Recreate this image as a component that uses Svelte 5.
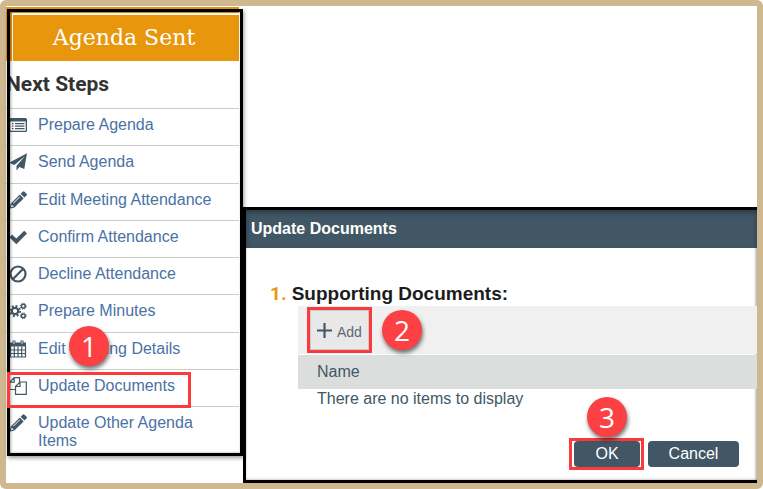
<script lang="ts">
  type Step = { icon: string; label: string; badge?: string; marked?: boolean };

  const steps: Step[] = [
    { icon: 'list', label: 'Prepare Agenda' },
    { icon: 'plane', label: 'Send Agenda' },
    { icon: 'pencil', label: 'Edit Meeting Attendance' },
    { icon: 'check', label: 'Confirm Attendance' },
    { icon: 'ban', label: 'Decline Attendance' },
    { icon: 'cogs', label: 'Prepare Minutes' },
    { icon: 'calendar', label: 'Edit Meeting Details', badge: '1' },
    { icon: 'files', label: 'Update Documents', marked: true },
    { icon: 'pencil', label: 'Update Other Agenda Items' }
  ];
</script>

{#snippet glyph(name: string)}
  <svg class="icon" viewBox="0 0 18 18" aria-hidden="true">
    {#if name === 'list'}
      <path fill-rule="evenodd" d="M1.5 2h15A1.5 1.5 0 0 1 18 3.500v11a1.500 1.500 0 0 1-1.500 1.500h-15A1.500 1.500 0 0 1 0 14.500v-11A1.500 1.500 0 0 1 1.500 2zM1.300 5.500v8.700q0 .5.5.5h14.400q.5 0 .5-.5V5.500z" />
      <path d="M3 7h1.500v1.300H3zM3 9.500h1.500v1.300H3zM3 12h1.500v1.300H3zM6 7h9.500v1.300H6zM6 9.500h9.500v1.300H6zM6 12h9.500v1.300H6z" />
    {:else if name === 'plane'}
      <path d="M18 .3 15.300 16l-5-2.100L7.500 17.500V13L15.700 3.200 5.400 11.900 0 9.700z" />
    {:else if name === 'pencil'}
      <path fill-rule="evenodd" d="M11.600 2.800 13.700.7q.9-.9 1.800 0l2 2q.9.9 0 1.800l-2.100 2.100zM10.800 3.600l3.800 3.800-9.200 9.200L.4 17.800l1.200-5zM2.600 13.500l-.7 2.800 2.800-.7zM10.500 5.500 4 12l.5.5L11 6z" />
    {:else if name === 'check'}
      <path d="M15.200 2.700 18 5.500 7.300 16.200.3 9.200l2.800-2.800 4.200 4.200z" />
    {:else if name === 'ban'}
      <circle cx="9" cy="9" r="7.500" class="line thick" />
      <path d="M3.800 14.200 14.200 3.800" class="line thick" />
    {:else if name === 'cogs'}
      <circle cx="6" cy="9" r="3.200" class="line thick" />
      <circle cx="6" cy="9" r="5" class="line teeth" />
      <circle cx="14.300" cy="4.200" r="1.900" class="line" />
      <circle cx="14.300" cy="4.200" r="2.900" class="line small-teeth" />
      <circle cx="14.300" cy="13.800" r="1.900" class="line" />
      <circle cx="14.300" cy="13.800" r="2.900" class="line small-teeth" />
    {:else if name === 'calendar'}
      <path d="M1 2.500h16v4H1z" />
      <path d="M3.500.5h3V5h-3zM11.500.5h3V5h-3z" />
      <path d="M1.500 6v11h15V6M5.300 6.500V17M9 6.500V17M12.700 6.500V17M1.500 10h15M1.500 13.500h15" class="line thin" />
      <path d="M5 1v3M13 1v3" class="slot" />
    {:else if name === 'files'}
      <path d="M6.500 12.500H.7V5.200L5.200.700h5.300v4M5.200.700v4.500H.7M6.500 9.500 11 5h6.300v12.300H6.500zM11 5v4.500H6.500" class="line thin" />
    {/if}
  </svg>
{/snippet}

<main class="frame">
  <aside class="sidebar">
    <div class="banner">
      <h1>Agenda Sent</h1>
    </div>
    <h2>Next Steps</h2>
    <ul class="steps">
      {#each steps as step}
        <li class:marked={step.marked}>
          <a href="#{step.icon}">
            {@render glyph(step.icon)}
            <span>{step.label}</span>
          </a>
          {#if step.badge}
            <b class="badge on-step">{step.badge}</b>
          {/if}
        </li>
      {/each}
    </ul>
  </aside>

  <section class="dialog" role="dialog" aria-labelledby="dialog-title">
    <header id="dialog-title">Update Documents</header>
    <div class="body">
      <h3><span class="num">1.</span> Supporting Documents:</h3>
      <div class="toolbar">
        <div class="callout">
          <button class="add" type="button">
            <svg viewBox="0 0 14 14" aria-hidden="true">
              <path d="M7 0v14M0 7h14" />
            </svg>
            Add
          </button>
        </div>
        <b class="badge">2</b>
      </div>
      <table>
        <thead>
          <tr><th scope="col">Name</th></tr>
        </thead>
        <tbody>
          <tr><td>There are no items to display</td></tr>
        </tbody>
      </table>
    </div>
    <footer>
      <div class="callout">
        <button class="action ok" type="button">OK</button>
        <b class="badge on-ok">3</b>
      </div>
      <button class="action cancel" type="button">Cancel</button>
    </footer>
  </section>
</main>

<style>
  :global(body) {
    background: #fff;
  }
  .frame {
    --tan: #cfb88f;
    --slate: #415766;
    --red: #fc3a3c;
    box-sizing: border-box;
    min-height: 100vh;
    display: grid;
    grid-template-columns: 237px 1fr;
    background: #fff;
    border: 6px solid var(--tan);
    border-radius: 6px;
    font-family: 'Liberation Sans', Arial, sans-serif;
    font-size: 16px;
    line-height: 18px;
    color: var(--slate);
  }
  h1,
  h2,
  h3 {
    margin: 0;
  }

  /* sidebar */
  .sidebar {
    position: relative;
    align-self: start;
    box-sizing: border-box;
    min-height: 450px;
    display: flex;
    flex-direction: column;
    padding: 1px 4px 4px 0;
  }
  /* the heavy outline lies over the edges of the list */
  .sidebar::after {
    content: '';
    position: absolute;
    inset: 3px 0 0 1px;
    border: 3px solid #000;
    box-shadow: 1px 2px 4px rgba(0, 0, 0, 0.4), inset 1px 0 3px rgba(0, 0, 0, 0.35);
    pointer-events: none;
  }
  .banner {
    background: #e8960c;
    padding: 6px 0 0 6px;
  }
  h1 {
    border-top: 2px solid #fff;
    border-left: 1px solid #fff;
    padding: 10px 4px 10px 0;
    font-family: 'Roboto Slab', 'DejaVu Serif', serif;
    font-size: 22px;
    font-weight: 400;
    line-height: 26px;
    text-align: center;
    color: #fff;
  }
  h2 {
    padding: 10px 0 11px;
    font-family: 'Roboto Slab', 'Roboto', sans-serif;
    font-size: 21px;
    font-weight: 700;
    line-height: 26px;
    color: #333;
  }
  .steps {
    flex: 1;
    display: flex;
    flex-direction: column;
    list-style: none;
    margin: 0;
    padding: 0;
  }
  .steps li {
    position: relative;
    flex: 1 0 auto;
    border-top: 1px solid #ccc;
    padding: 7px 0 10px;
  }
  .steps li:last-child {
    flex-grow: 0;
    padding-bottom: 2px;
  }
  .steps a {
    display: flex;
    gap: 11px;
    padding: 0 24px 0 3px;
    color: #4a72a4;
    text-decoration: none;
  }
  .marked::after {
    content: '';
    position: absolute;
    inset: 2px 48px -2px 1px;
    border: 3px solid var(--red);
    z-index: 1;
  }
  .icon {
    flex: none;
    width: 18px;
    height: 18px;
    fill: var(--slate);
  }
  .line {
    fill: none;
    stroke: var(--slate);
    stroke-width: 1.5;
  }
  .thick {
    stroke-width: 2.2;
  }
  .thin {
    stroke-width: 1.2;
  }
  .teeth {
    stroke-width: 2;
    stroke-dasharray: 1.96 1.96;
  }
  .small-teeth {
    stroke-width: 1;
    stroke-dasharray: 1.14 1.14;
  }
  .slot {
    stroke: #fff;
    stroke-width: 0.8;
  }

  /* numbered callouts */
  .badge {
    display: block;
    width: 40px;
    height: 40px;
    border-radius: 50%;
    background: #fc4043;
    box-shadow: 1px 3px 4px rgba(0, 0, 0, 0.55);
    font-family: 'Open Sans', sans-serif;
    font-size: 28px;
    font-weight: 400;
    line-height: 40px;
    text-align: center;
    color: #fff;
  }
  .on-step {
    position: absolute;
    left: 63px;
    top: -7px;
    z-index: 2;
  }
  .on-ok {
    position: absolute;
    left: 15px;
    top: -44px;
  }
  .callout {
    position: relative;
    border: 3px solid var(--red);
  }

  /* dialog */
  .dialog {
    align-self: end;
    border: 3px solid #000;
    border-right: 0;
    box-shadow: inset -1px 0 3px rgba(0, 0, 0, 0.4);
  }
  header {
    padding: 10px 5px;
    background: var(--slate);
    box-shadow: inset 0 3px 5px rgba(0, 0, 0, 0.3);
    font-weight: 700;
    color: #fff;
  }
  .body {
    padding: 34px 0 0 52px;
  }
  h3 {
    margin-left: -28px;
    font-size: 19px;
    line-height: 24px;
    color: #1c1c1c;
  }
  .num {
    font-family: 'Roboto Slab', 'Roboto', sans-serif;
    color: #e8960c;
  }
  .toolbar {
    display: flex;
    align-items: center;
    gap: 10px;
    padding: 1px 0 1px 9px;
    background: #f0f0f0;
  }
  .add {
    display: flex;
    align-items: center;
    gap: 5px;
    height: 40px;
    padding: 4px 6px 0;
    border: 1px solid #c9cccc;
    background: #e8e8e8;
    font: 14px/18px 'Liberation Sans', Arial, sans-serif;
    color: #586873;
  }
  .add svg {
    width: 15px;
    height: 15px;
    margin-bottom: 4px;
    stroke: var(--slate);
    stroke-width: 2;
  }
  table {
    width: 100%;
    margin-top: 1px;
    border-collapse: collapse;
    text-align: left;
  }
  th {
    padding: 8px 19px;
    background: #dcdedd;
    font-weight: 400;
  }
  td {
    padding: 1px 19px;
  }
  footer {
    display: flex;
    justify-content: flex-end;
    align-items: center;
    gap: 4px;
    padding: 29px 18px 10px 0;
  }
  .action {
    display: block;
    height: 26px;
    border: 0;
    border-radius: 4px;
    background: var(--slate);
    font: 16px/18px 'Liberation Sans', Arial, sans-serif;
    color: #fff;
  }
  .ok {
    width: 66px;
    margin: 0 1px 0 2px;
  }
  .cancel {
    width: 91px;
  }
</style>
